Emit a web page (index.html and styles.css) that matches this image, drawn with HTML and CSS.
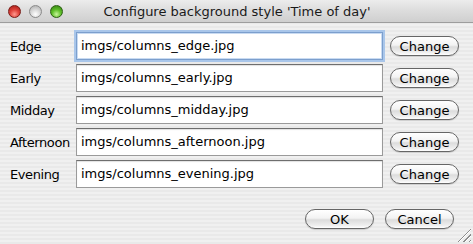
FILE: index.html
```html
<!DOCTYPE html>
<html>
<head>
    <meta charset="utf-8">
    <link rel="stylesheet" href="styles.css">
</head>
<body>
    <div class="window">
        <div class="titlebar">
            <div class="lights">
                <span class="light light-close"></span>
                <span class="light light-min"></span>
                <span class="light light-zoom"></span>
            </div>
            <div class="title">Configure background style 'Time of day'</div>
        </div>

        <div class="content">
            <div class="rows">
                <label class="row-label">Edge</label>
                <div class="field focused">imgs/columns_edge.jpg</div>
                <button class="btn">Change</button>

                <label class="row-label">Early</label>
                <div class="field">imgs/columns_early.jpg</div>
                <button class="btn">Change</button>

                <label class="row-label">Midday</label>
                <div class="field">imgs/columns_midday.jpg</div>
                <button class="btn">Change</button>

                <label class="row-label">Afternoon</label>
                <div class="field">imgs/columns_afternoon.jpg</div>
                <button class="btn">Change</button>

                <label class="row-label">Evening</label>
                <div class="field">imgs/columns_evening.jpg</div>
                <button class="btn">Change</button>
            </div>

            <div class="actions">
                <button class="btn">OK</button>
                <button class="btn">Cancel</button>
            </div>
        </div>

        <div class="grip"></div>
    </div>
</body>
</html>
```

FILE: styles.css
```css
* {
    margin: 0;
    padding: 0;
    box-sizing: border-box;
}

body {
    width: 473px;
    height: 244px;
    font-family: "DejaVu Sans", "Liberation Sans", sans-serif;
    font-size: 13px;
    color: #000;
    overflow: hidden;
}

.window {
    position: relative;
    height: 244px;
    background: repeating-linear-gradient(180deg, #f0f0f0 0px, #f0f0f0 2px, #e9e9e9 2px, #e9e9e9 4px);
}

.titlebar {
    height: 23px;
    display: flex;
    align-items: center;
    background: linear-gradient(180deg, #ececec 0%, #dcdcdc 50%, #cfcfcf 100%);
    border-bottom: 1px solid #9d9d9d;
}

.lights {
    display: flex;
    gap: 8px;
    padding-left: 8px;
    padding-top: 1px;
}

.light {
    width: 13px;
    height: 13px;
    border-radius: 50%;
    border: 1px solid #6a6a6a;
}

.light-close {
    background: radial-gradient(circle at 50% 75%, #ff9a8f 0%, #e0443c 45%, #a01a14 100%);
    border-color: #7a1b16;
}

.light-min {
    background: radial-gradient(circle at 50% 75%, #ffffff 0%, #dadada 45%, #a9a9a9 100%);
    border-color: #8a8a8a;
}

.light-zoom {
    background: radial-gradient(circle at 50% 75%, #c7f59a 0%, #5fbf2a 45%, #2f7a0d 100%);
    border-color: #2b5f12;
}

.title {
    flex: 1;
    text-align: center;
    padding-right: 62px;
    padding-top: 1px;
    color: #1a1a1a;
}

.content {
    padding: 9px 14px 0 10px;
}

.rows {
    display: grid;
    grid-template-columns: 66px 307px 76px;
    row-gap: 4px;
    align-items: center;
}

.row-label {
    white-space: nowrap;
    letter-spacing: -0.4px;
}

.field {
    height: 28px;
    line-height: 26px;
    padding-left: 4px;
    background: #fff;
    border: 1px solid #9a9a9a;
    border-top-color: #6e6e6e;
    box-shadow: inset 0 1px 1px rgba(0, 0, 0, 0.12);
    white-space: nowrap;
    overflow: hidden;
}

.field.focused {
    border-color: #7c9fcd;
    box-shadow: 0 0 0 2px #a9c6ea, inset 0 0 0 1px #c9dbf2;
}

.btn {
    font-family: inherit;
    font-size: 13px;
    height: 20px;
    width: 69px;
    border: 1px solid #666;
    border-radius: 10px;
    color: #000;
    background: linear-gradient(180deg, #ffffff 0%, #f3f3f3 45%, #dcdcdc 55%, #eeeeee 85%, #ffffff 100%);
    box-shadow: 0 1px 1px rgba(0, 0, 0, 0.15);
    line-height: 17px;
}

.rows .btn {
    justify-self: end;
}

.actions {
    display: flex;
    justify-content: flex-end;
    gap: 11px;
    margin-top: 21px;
    padding-right: 5px;
}

.grip {
    position: absolute;
    right: 2px;
    bottom: 2px;
    width: 14px;
    height: 14px;
    background: repeating-linear-gradient(135deg, transparent 0px, transparent 2px, #8c8c8c 2px, #8c8c8c 3px, #ffffff 3px, #ffffff 4px);
    clip-path: polygon(100% 0, 100% 100%, 0 100%);
}
```
